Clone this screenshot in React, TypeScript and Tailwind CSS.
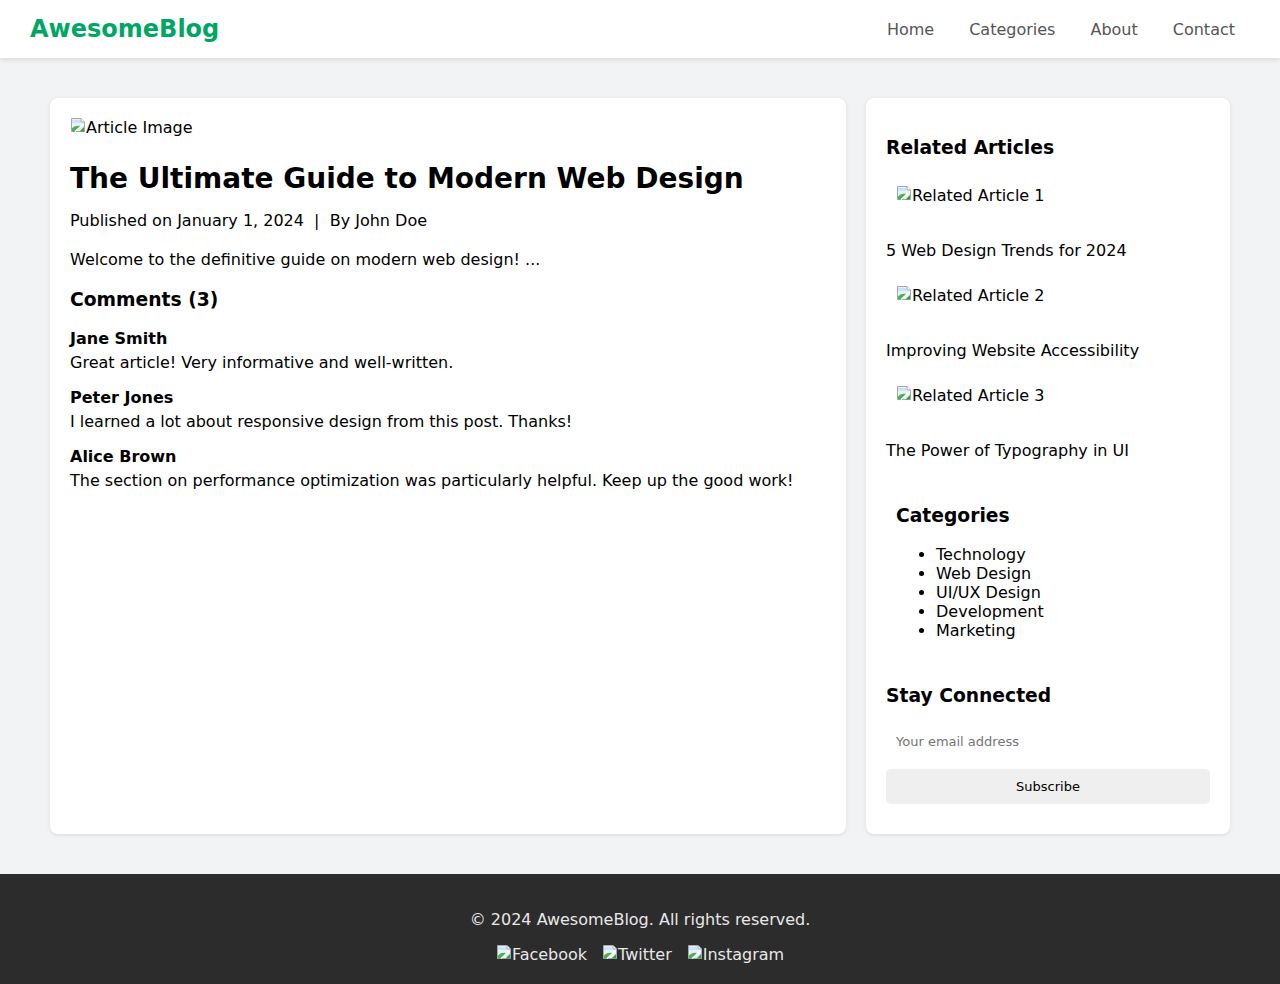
import React from "react";

function BrokenImg({ alt }: { alt: string }) {
  return (
    <span className="whitespace-nowrap">
      <svg width="16" height="16" viewBox="0 0 16 16" className="inline align-baseline">
        <path d="M1.5 1.5h9.5l3.5 3.5v9.5h-13z" fill="#e9f1f8" stroke="#a0a8b0" />
        <path d="M11 1.5v3.5h3.5" fill="#ffffff" stroke="#a0a8b0" />
        <path d="M2 3h8v3H2z" fill="#cfe2f3" />
        <path d="M2 11.5c2.5-2.5 5-3 8-2.5l-5 5.5H2z" fill="#4caf50" />
        <path d="M9.5 14.5l4.5-4.5v4.5z" fill="#3e9a43" />
        <path d="M5 14.5l9-8" stroke="#ffffff" strokeWidth="1.2" />
      </svg>
      {alt}
    </span>
  );
}

export default function App() {
  const related = [
    { alt: "Related Article 1", title: "5 Web Design Trends for 2024" },
    { alt: "Related Article 2", title: "Improving Website Accessibility" },
    { alt: "Related Article 3", title: "The Power of Typography in UI" },
  ];
  const comments = [
    { name: "Jane Smith", text: "Great article! Very informative and well-written." },
    { name: "Peter Jones", text: "I learned a lot about responsive design from this post. Thanks!" },
    {
      name: "Alice Brown",
      text: "The section on performance optimization was particularly helpful. Keep up the good work!",
    },
  ];
  return (
    <div className="min-h-[984px] bg-[#f2f3f5] font-['DejaVu_Sans',sans-serif] text-black flex flex-col">
      <header className="h-[58px] bg-white shadow-[0_2px_5px_rgba(0,0,0,0.1)] flex items-center justify-between pl-[30px] pr-[45px] relative z-10">
        <div className="text-[24px] font-bold text-[#00a664] leading-[28px]">AwesomeBlog</div>
        <nav className="mt-[2px] flex gap-[35px] text-[16px] text-[#555555]">
          <span>Home</span>
          <span>Categories</span>
          <span>About</span>
          <span>Contact</span>
        </nav>
      </header>

      <main className="flex gap-[20px] px-[50px] pt-[40px] pb-[40px]">
        <article className="flex-1 bg-white rounded-[8px] shadow-[0_1px_4px_rgba(0,0,0,0.1)] p-[20px]">
          <div className="-mt-[1px] h-[19px] leading-[17px] text-[16px]">
            <BrokenImg alt="Article Image" />
          </div>
          <h1 className="mt-[26px] text-[28px] leading-[33px] font-bold">
            The Ultimate Guide to Modern Web Design
          </h1>
          <p className="mt-[14px] text-[16px] leading-[24px]">
            Published on January 1, 2024&nbsp; |&nbsp; By John Doe
          </p>
          <p className="mt-[15px] text-[16px] leading-[24px]">
            Welcome to the definitive guide on modern web design! ...
          </p>
          <h2 className="mt-[14px] text-[18.72px] leading-[28px] font-bold">Comments (3)</h2>
          <div className="mt-[13px] flex flex-col gap-[11px]">
            {comments.map((c) => (
              <div key={c.name} className="text-[16px] leading-[24px]">
                <div className="font-bold">{c.name}</div>
                <div>{c.text}</div>
              </div>
            ))}
          </div>
        </article>

        <aside className="w-[364px] shrink-0 bg-white rounded-[8px] shadow-[0_1px_4px_rgba(0,0,0,0.1)] p-[20px] pb-[30px]">
          <h3 className="mt-[16px] text-[18.72px] leading-[28px] font-bold">Related Articles</h3>
          <div className="flex flex-col">
            {related.map((r, i) => (
              <div key={r.alt} className={i === 0 ? "mt-[22px]" : "mt-[21px]"}>
                <div className="pl-[10px] h-[24px] leading-[24px] text-[16px]">
                  <BrokenImg alt={r.alt} />
                </div>
                <div className="mt-[31px] text-[16px] leading-[24px]">{r.title}</div>
              </div>
            ))}
          </div>

          <div className="px-[10px]">
            <h3 className="mt-[39px] text-[18.72px] leading-[28px] font-bold">Categories</h3>
            <ul className="mt-[15px] list-disc pl-[40px] text-[16px] leading-[19px]">
              <li>Technology</li>
              <li>Web Design</li>
              <li>UI/UX Design</li>
              <li>Development</li>
              <li>Marketing</li>
            </ul>
          </div>

          <h3 className="mt-[42px] text-[18.72px] leading-[28px] font-bold">Stay Connected</h3>
          <input
            type="email"
            placeholder="Your email address"
            className="mt-[16px] block w-full h-[30px] px-[10px] text-[13px] outline-none placeholder:text-[#757575] bg-white"
          />
          <button className="mt-[13px] block w-full h-[35px] rounded-[5px] bg-[#efefef] text-[13px] text-black">
            Subscribe
          </button>
        </aside>
      </main>

      <footer className="flex-1 bg-[#2c2c2c] text-[#e8e8e8] text-center pt-[34px] pb-[18px] text-[16px] leading-[24px]">
        <p>© 2024 AwesomeBlog. All rights reserved.</p>
        <div className="mt-[11px] flex justify-center gap-[15px]">
          <BrokenImg alt="Facebook" />
          <BrokenImg alt="Twitter" />
          <BrokenImg alt="Instagram" />
        </div>
      </footer>
    </div>
  );
}
